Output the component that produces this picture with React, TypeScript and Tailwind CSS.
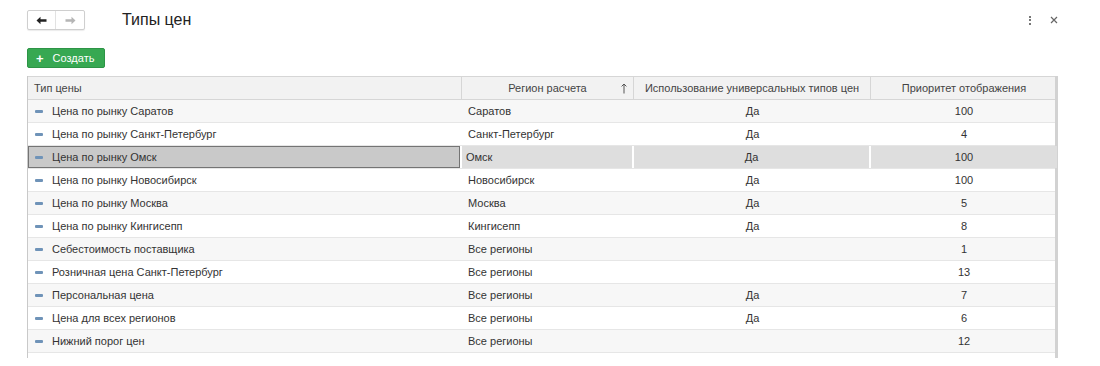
import React from "react";

type Row = {
  name: string;
  region: string;
  universal: boolean;
  priority: number;
  selected?: boolean;
};

const rows: Row[] = [
  { name: "Цена по рынку Саратов", region: "Саратов", universal: true, priority: 100 },
  { name: "Цена по рынку Санкт-Петербург", region: "Санкт-Петербург", universal: true, priority: 4 },
  { name: "Цена по рынку Омск", region: "Омск", universal: true, priority: 100, selected: true },
  { name: "Цена по рынку Новосибирск", region: "Новосибирск", universal: true, priority: 100 },
  { name: "Цена по рынку Москва", region: "Москва", universal: true, priority: 5 },
  { name: "Цена по рынку Кингисепп", region: "Кингисепп", universal: true, priority: 8 },
  { name: "Себестоимость поставщика", region: "Все регионы", universal: false, priority: 1 },
  { name: "Розничная цена Санкт-Петербург", region: "Все регионы", universal: false, priority: 13 },
  { name: "Персональная цена", region: "Все регионы", universal: true, priority: 7 },
  { name: "Цена для всех регионов", region: "Все регионы", universal: true, priority: 6 },
  { name: "Нижний порог цен", region: "Все регионы", universal: false, priority: 12 },
];

const cols = "grid grid-cols-[434px_172px_237px_186px]";

function Arrow({ dir, color }: { dir: "left" | "right"; color: string }) {
  return (
    <svg width="11" height="9" viewBox="0 0 11 9" className={dir === "right" ? "rotate-180" : ""}>
      <path d="M0.5 4.5 L4.5 0.8 L4.5 3.3 L10.5 3.3 L10.5 5.7 L4.5 5.7 L4.5 8.2 Z" fill={color} />
    </svg>
  );
}

function RowIcon() {
  return <span className="block w-[8px] h-[3px] rounded-[1px] bg-[#6f93b8]" />;
}

export default function App() {
  return (
    <div className="w-[1100px] h-[366px] bg-white font-['Liberation_Sans',Arial,sans-serif] text-[11px] text-[#333] overflow-hidden">
      {/* top bar */}
      <div className="flex items-center h-[20px] mt-[10px] pl-[27px] pr-[42px]">
        <div className="flex h-[20px] border border-[#cfcfcf] rounded-[2px] bg-white shadow-[0_1px_1px_rgba(0,0,0,0.08)]">
          <button className="w-[28px] flex items-center justify-center border-r border-[#e2e2e2]">
            <Arrow dir="left" color="#222" />
          </button>
          <button className="w-[28px] flex items-center justify-center">
            <Arrow dir="right" color="#b5b5b5" />
          </button>
        </div>
        <h1 className="ml-[37px] text-[16px] text-[#222] leading-none">Типы цен</h1>
        <div className="ml-auto flex items-center gap-[19px]">
          <span className="flex flex-col gap-[1.5px]">
            <span className="block w-[2px] h-[2px] bg-[#777]" />
            <span className="block w-[2px] h-[2px] bg-[#777]" />
            <span className="block w-[2px] h-[2px] bg-[#777]" />
          </span>
          <svg width="8" height="8" viewBox="0 0 8 8">
            <path d="M1 1 L7 7 M7 1 L1 7" stroke="#666" strokeWidth="1.2" />
          </svg>
        </div>
      </div>

      {/* create button */}
      <div className="pl-[27px] mt-[18px]">
        <button className="flex items-center h-[20px] w-[78px] pl-[8px] gap-[9px] bg-[#37a852] border border-[#2d9446] rounded-[2px] text-white text-[11px]">
          <span className="text-[13px] leading-none font-bold">+</span>
          <span>Создать</span>
        </button>
      </div>

      {/* table */}
      <div className="ml-[27px] mt-[8px] w-[1031px] h-[282px] border-l border-[#c9c9c9] border-r-[3px] border-r-[#d2d2d2]">
        <div className={`${cols} h-[24px] bg-[#f2f2f2] border-t border-b border-[#d6d6d6] text-[#444]`}>
          <div className="flex items-center pl-[6px] border-r border-[#d6d6d6]">Тип цены</div>
          <div className="relative flex items-center justify-center border-r border-[#d6d6d6]">
            Регион расчета
            <svg width="6" height="11" viewBox="0 0 6 11" className="absolute right-[6px] top-[6px]">
              <path d="M3 10.5 L3 1 M0.6 3.4 L3 1 L5.4 3.4" stroke="#555" strokeWidth="1" fill="none" />
            </svg>
          </div>
          <div className="flex items-center justify-center border-r border-[#d6d6d6]">
            Использование универсальных типов цен
          </div>
          <div className="flex items-center justify-center">Приоритет отображения</div>
        </div>
        {rows.map((r, i) =>
          r.selected ? (
            <div key={i} className={`${cols} h-[23px] border-b border-[#e6e6e6] bg-white`}>
              <div className="flex items-center gap-[9px] pl-[6px] mr-[2px] bg-[#c9c9c9] border border-[#747474]">
                <RowIcon />
                {r.name}
              </div>
              <div className="flex items-center pl-[4px] mr-[2px] bg-[#dedede]">{r.region}</div>
              <div className="flex items-center justify-center mr-[2px] bg-[#dedede]">{r.universal ? "Да" : ""}</div>
              <div className="flex items-center justify-center bg-[#dedede]">{r.priority}</div>
            </div>
          ) : (
            <div
              key={i}
              className={`${cols} h-[23px] border-b border-[#e6e6e6] ${i % 2 === 0 ? "bg-[#f7f7f7]" : "bg-white"}`}
            >
              <div className="flex items-center gap-[9px] pl-[7px]">
                <RowIcon />
                {r.name}
              </div>
              <div className="flex items-center pl-[6px]">{r.region}</div>
              <div className="flex items-center justify-center">{r.universal ? "Да" : ""}</div>
              <div className="flex items-center justify-center">{r.priority}</div>
            </div>
          )
        )}
      </div>
    </div>
  );
}
